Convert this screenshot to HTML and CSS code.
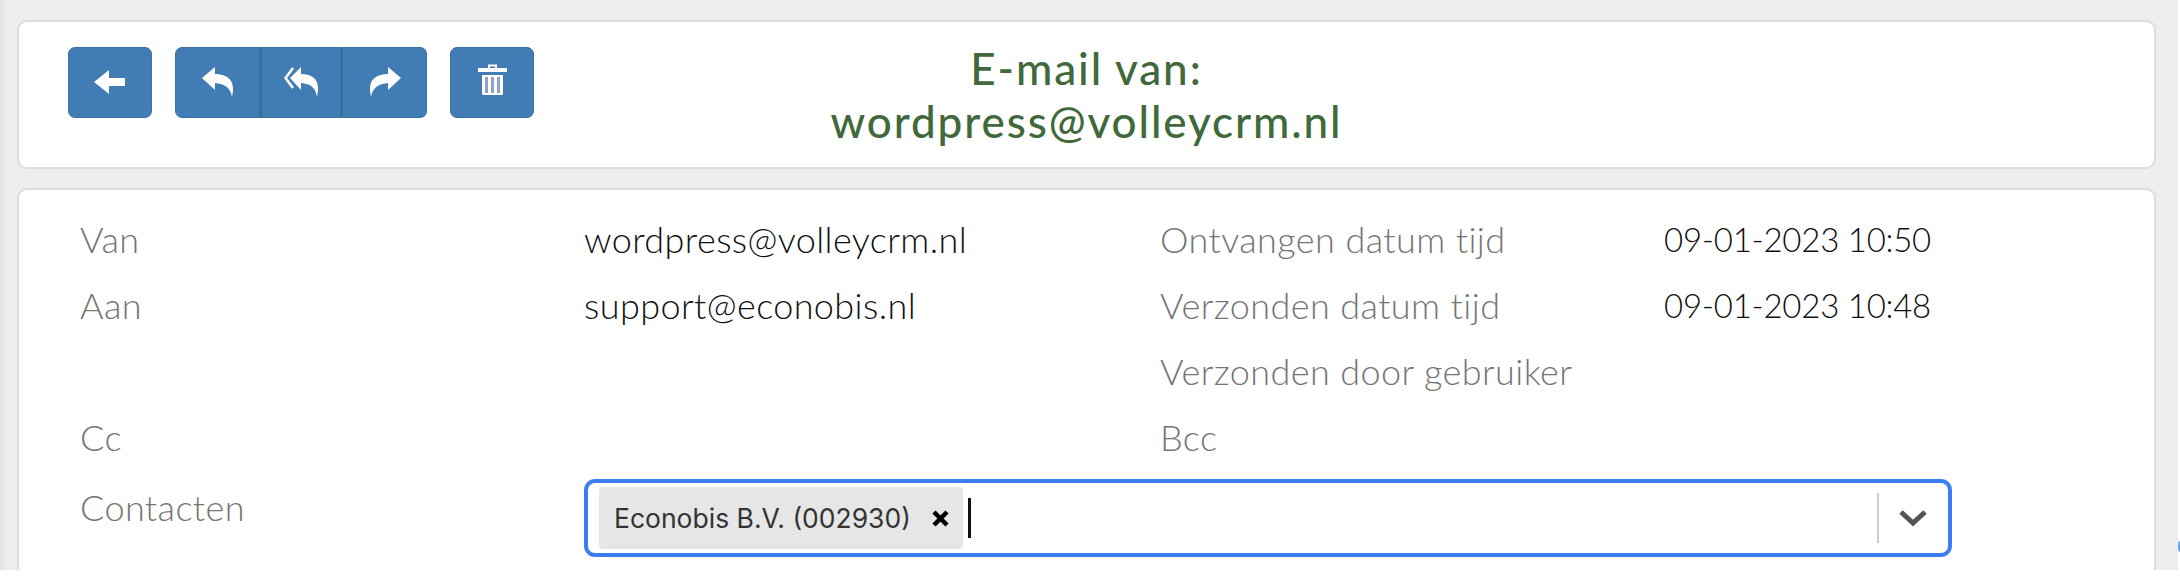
FILE: index.html
```html
<!DOCTYPE html>
<html lang="nl">

<head>
    <meta charset="UTF-8" />
    <title>E-mail van wordpress@volleycrm.nl</title>
    <link rel="stylesheet" href="styles.css">
</head>

<body>
    <main class="page">
        <section class="panel toolbar">
            <div class="actions">
                <button class="btn" type="button" aria-label="Terug">
                    <svg width="32" height="24" viewBox="0 0 32 24"><path d="M0 12 15 0v8h16v8H15v8z" fill="#fff" /></svg>
                </button>
                <div class="btn-group">
                    <button class="btn" type="button" aria-label="Beantwoorden">
                        <svg width="32" height="30" viewBox="0 0 32 30"><path d="M0 11 13 0v7c11 0 19 5 18 17l-1 6c-1-6-4-13-17-14v7z" fill="#fff" /></svg>
                    </button>
                    <button class="btn" type="button" aria-label="Allen beantwoorden">
                        <svg width="35" height="30" viewBox="0 0 35 30"><path d="M9 1 1.500 11 9 21" fill="none" stroke="#fff" stroke-width="2.500" /><path d="M6 11 17 0v7c11 0 18 5 17 17l-1 6c-1-6-3-13-16-14v7z" fill="#fff" /></svg>
                    </button>
                    <button class="btn" type="button" aria-label="Doorsturen">
                        <svg width="32" height="30" viewBox="0 0 32 30"><path d="M32 11 19 0v7C8 7 0 12 1 24l1 6c1-6 4-13 17-14v7z" fill="#fff" /></svg>
                    </button>
                </div>
                <button class="btn btn-trash" type="button" aria-label="Verwijderen">
                    <svg width="29" height="32" viewBox="0 0 29 32">
                        <path d="M0 5h10V1.500h9V5h10v4H0zM12 5h5V3.500h-5z" fill="#fff" fill-rule="evenodd" />
                        <path d="M4 12h21v18.500a1.500 1.500 0 0 1-1.500 1.500h-18A1.500 1.500 0 0 1 4 30.500z" fill="#fff" />
                        <path d="M7 14h3v16H7zM13 14h3v16h-3zM19 14h3v16h-3z" fill="#8fa3c9" />
                    </svg>
                </button>
            </div>
            <h1 class="title">E-mail van:<br>wordpress@volleycrm.nl</h1>
        </section>

        <section class="panel details">
            <div class="label">Van</div>
            <div class="value">wordpress@volleycrm.nl</div>
            <div class="label">Ontvangen datum tijd</div>
            <div class="value date">09-01-2023 10:50</div>

            <div class="label">Aan</div>
            <div class="value">support@econobis.nl</div>
            <div class="label">Verzonden datum tijd</div>
            <div class="value date">09-01-2023 10:48</div>

            <div class="label"></div>
            <div class="value"></div>
            <div class="label">Verzonden door gebruiker</div>
            <div class="value"></div>

            <div class="label">Cc</div>
            <div class="value"></div>
            <div class="label">Bcc</div>
            <div class="value"></div>

            <div class="label contacts-label">Contacten</div>
            <div class="select">
                <div class="chip">
                    <span class="chip-text">Econobis B.V. (002930)</span>
                    <svg width="17" height="17" viewBox="0 0 17 17"><path d="M2 2l13 13M15 2 2 15" stroke="#000" stroke-width="4.500" /></svg>
                </div>
                <span class="caret"></span>
                <span class="select-sep"></span>
                <svg class="chevron" width="30" height="18" viewBox="0 0 30 18"><path d="M3 3l12 11L27 3" fill="none" stroke="#555" stroke-width="5" /></svg>
            </div>
        </section>
    </main>
    <span class="edge-dot"></span>
</body>

</html>
```

FILE: styles.css
```css
html,
body {
    margin: 0;
    background: #ffffff;
}

body {
    position: relative;
    height: 588px;
    overflow: hidden;
    font-family: "Lato", sans-serif;
}

.page {
    box-sizing: border-box;
    width: 2178px;
    height: 570px;
    overflow: hidden;
    padding: 20px 22px 0 17px;
    background: linear-gradient(to right, #e4e2e3, #efedee 8px) #efedee;
}

.panel {
    box-sizing: border-box;
    background: #ffffff;
    border: 2px solid #dedcdd;
    border-radius: 10px;
}

.toolbar {
    display: grid;
    grid-template-columns: 1fr 1fr 1fr;
    height: 149px;
    margin-bottom: 19px;
    padding-top: 25px;
}

.actions {
    display: flex;
    align-items: flex-start;
    gap: 23px;
    padding-left: 49px;
}

.btn {
    display: flex;
    align-items: center;
    justify-content: center;
    width: 84px;
    height: 71px;
    padding: 0;
    background: #417cb4;
    border: 1px solid #3b72a6;
    border-radius: 7px;
}

.btn svg {
    margin-top: -2px;
}

.btn-trash svg {
    margin-top: -7px;
}

.btn-group {
    display: flex;
}

.btn-group .btn {
    width: 81px;
    border-radius: 0;
    border-left-width: 0;
}

.btn-group .btn:first-child {
    width: 85px;
    border-left-width: 1px;
    border-radius: 7px 0 0 7px;
}

.btn-group .btn:last-child {
    width: 86px;
    border-radius: 0 7px 7px 0;
}

.btn-group .btn + .btn {
    border-left: 2px solid #396c9f;
}

.title {
    grid-column: 2;
    margin: 0;
    margin-top: -5px;
    font-size: 44px;
    font-weight: 500;
    line-height: 53px;
    letter-spacing: 1.900px;
    text-align: center;
    color: #41693c;
}

.details {
    display: grid;
    grid-template-columns: 504px 576px 504px 1fr;
    grid-auto-rows: 66px;
    align-items: center;
    height: 500px;
    padding: 16px 0 0 61px;
    font-size: 36px;
    letter-spacing: 0.4px;
}

.label {
    font-weight: 300;
    color: #757575;
}

.value {
    font-weight: 300;
    color: #111111;
}

.date {
    font-size: 33px;
    letter-spacing: -0.25px;
}

.contacts-label {
    margin-top: 7px;
}

.select {
    grid-column: 2 / 5;
    box-sizing: border-box;
    display: flex;
    align-items: center;
    width: 1368px;
    height: 78px;
    margin-top: 30px;
    padding: 4px 0 4px 11px;
    border: 4px solid #3b7ef0;
    border-radius: 11px;
    letter-spacing: 0;
}

.chip {
    display: flex;
    align-items: center;
    gap: 21px;
    height: 62px;
    padding: 0 14px 0 15px;
    background: #e6e6e6;
    border-radius: 4px;
    font-family: "Inter", sans-serif;
    font-size: 26.500px;
    color: #333333;
}

.caret {
    width: 3px;
    height: 40px;
    margin-left: 5px;
    background: #111111;
}

.select-sep {
    width: 2px;
    height: 50px;
    margin-left: auto;
    background: #cccccc;
}

.chevron {
    margin: 0 20px 0 19px;
}

.edge-dot {
    position: absolute;
    top: 541px;
    left: 2178px;
    width: 6px;
    height: 11px;
    background: #62a8f2;
    border-radius: 3px;
}
```
